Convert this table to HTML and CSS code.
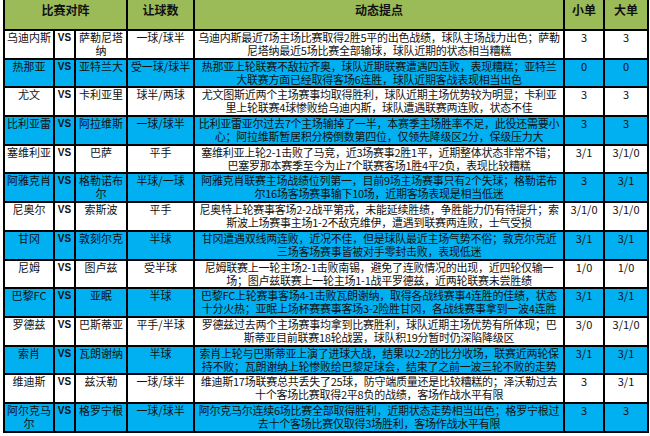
FILE: index.html
```html
<!DOCTYPE html>
<html lang="zh-CN">
<head>
<meta charset="utf-8">
<title>赛事分析</title>
<link rel="stylesheet" href="styles.css">
</head>
<body>
<table class="sheet">
  <colgroup>
    <col class="c-home"><col class="c-vs"><col class="c-away"><col class="c-hc"><col class="c-note"><col class="c-small"><col class="c-big">
  </colgroup>
  <thead>
    <tr class="head">
      <th colspan="3">比赛对阵</th>
      <th>让球数</th>
      <th>动态提点</th>
      <th>小单</th>
      <th>大单</th>
    </tr>
  </thead>
  <tbody>
    <tr class="w"><td>乌迪内斯</td><td class="vs">VS</td><td>萨勒尼塔纳</td><td>一球/球半</td><td class="note">乌迪内斯最近7场主场比赛取得2胜5平的出色战绩，球队主场战力出色；萨勒
尼塔纳最近5场比赛全部输球，球队近期的状态相当糟糕</td><td>3</td><td>3</td></tr>
    <tr class="b"><td>热那亚</td><td class="vs">VS</td><td>亚特兰大</td><td>受一球/球半</td><td class="note">热那亚上轮联赛不敌拉齐奥，球队近期联赛遭遇四连败，表现糟糕；亚特兰
大联赛方面已经取得客场6连胜，球队近期客战表现相当出色</td><td>0</td><td>0</td></tr>
    <tr class="w"><td>尤文</td><td class="vs">VS</td><td>卡利亚里</td><td>球半/两球</td><td class="note">尤文图斯近两个主场赛事均取得胜利，球队近期主场优势较为明显；卡利亚
里上轮联赛4球惨败给乌迪内斯，球队遭遇联赛两连败，状态不佳</td><td>3</td><td>3</td></tr>
    <tr class="b"><td>比利亚雷</td><td class="vs">VS</td><td>阿拉维斯</td><td>一球/球半</td><td class="note">比利亚雷亚尔过去7个主场输掉了一半，本赛季主场胜率不足，此役还需要小
心；阿拉维斯暂居积分榜倒数第四位，仅领先降级区2分，保级压力大</td><td>3</td><td>3</td></tr>
    <tr class="w"><td>塞维利亚</td><td class="vs">VS</td><td>巴萨</td><td>平手</td><td class="note">塞维利亚上轮2-1击败了马竞，近3场赛事2胜1平，近期整体状态非常不错；
巴塞罗那本赛季至今为止7个联赛客场1胜4平2负，表现比较糟糕</td><td>3/1</td><td>3/1/0</td></tr>
    <tr class="b"><td>阿雅克肖</td><td class="vs">VS</td><td>格勒诺布尔</td><td>半球/一球</td><td class="note">阿雅克肖联赛主场战绩位列第一，目前9场主场赛事只有2个失球；格勒诺布
尔16场客场赛事输下10场，近期客场表现是相当低迷</td><td>3</td><td>3/1</td></tr>
    <tr class="w"><td>尼奥尔</td><td class="vs">VS</td><td>索斯波</td><td>平手</td><td class="note">尼奥特上轮赛事客场2-2战平第戎，未能延续胜绩，争胜能力仍有待提升；索
斯波上场赛事主场1-2不敌克维伊，遭遇到联赛两连败，士气受损</td><td>3/1/0</td><td>3/1/0</td></tr>
    <tr class="b"><td>甘冈</td><td class="vs">VS</td><td>敦刻尔克</td><td>半球</td><td class="note">甘冈遭遇双线两连败，近况不佳，但是球队最近主场气势不俗；敦克尔克近
三场客场赛事皆被对手零封击败，表现低迷</td><td>3/1</td><td>3/1</td></tr>
    <tr class="w"><td>尼姆</td><td class="vs">VS</td><td>图卢兹</td><td>受半球</td><td class="note">尼姆联赛上一轮主场2-1击败南锡，避免了连败情况的出现，近四轮仅输一
场；图卢兹联赛上一轮主场1-1战平罗德兹，近两轮联赛未尝胜绩</td><td>1/0</td><td>1/0</td></tr>
    <tr class="b"><td>巴黎FC</td><td class="vs">VS</td><td>亚眠</td><td>半球</td><td class="note">巴黎FC上轮赛事客场4-1击败瓦朗谢纳，取得各战线赛事4连胜的佳绩，状态
十分火热；亚眠上场杯赛赛事客场3-2险胜甘冈，各战线赛事拿到一波4连胜</td><td>3/1</td><td>3/1</td></tr>
    <tr class="w"><td>罗德兹</td><td class="vs">VS</td><td>巴斯蒂亚</td><td>平手/半球</td><td class="note">罗德兹过去两个主场赛事均拿到比赛胜利，球队近期主场优势有所体现；巴
斯蒂亚目前联赛18轮战罢，球队积19分暂时仍深陷降级区</td><td>3/0</td><td>3/1/0</td></tr>
    <tr class="b"><td>索肖</td><td class="vs">VS</td><td>瓦朗谢纳</td><td>半球</td><td class="note">索肖上轮与巴斯蒂亚上演了进球大战，结果以2-2的比分收场，联赛近两轮保
持不败；瓦朗谢纳上轮惨败给巴黎足球会，结束了之前一波三轮不败的走势</td><td>3/1</td><td>3/1</td></tr>
    <tr class="w"><td>维迪斯</td><td class="vs">VS</td><td>兹沃勒</td><td>一球/球半</td><td class="note">维迪斯17场联赛总共丢失了25球，防守端质量还是比较糟糕的；泽沃勒过去
十个客场比赛取得2平8负的战绩，客场作战水平有限</td><td>3</td><td>3/1</td></tr>
    <tr class="b"><td>阿尔克马尔</td><td class="vs">VS</td><td>格罗宁根</td><td>一球/球半</td><td class="note">阿尔克马尔连续6场比赛全部取得胜利，近期状态走势相当出色；格罗宁根过
去十个客场比赛仅取得3场胜利，客场作战水平有限</td><td>3</td><td>3</td></tr>
  </tbody>
</table>
</body>
</html>
```

FILE: styles.css
```css
html, body {
  margin: 0;
  padding: 0;
  background: #fff;
}
body {
  padding: 0 0 0 3px;
  font-family: "Noto Sans CJK SC", "Noto Sans", sans-serif;
  font-size: 11px;
  color: #111;
}
.sheet {
  border-collapse: collapse;
  table-layout: fixed;
  width: 644px;
}
.c-home { width: 50px; }
.c-vs { width: 21px; }
.c-away { width: 52px; }
.c-hc { width: 67px; }
.c-note { width: 370px; }
.c-small { width: 40px; }
.c-big { width: 44px; }

.sheet th,
.sheet td {
  border: 2px solid #000;
  padding: 0 1px;
  text-align: center;
  vertical-align: top;
  line-height: 13px;
  overflow: hidden;
}
.head th {
  background: #9bbb59;
  border-top: none;
  height: 26px;
  font-weight: bold;
  font-size: 12px;
  line-height: 14px;
  padding-top: 3px;
}
.sheet tbody td {
  height: 26.7px;
}
.w td { background: #fff; }
.b td { background: #00b0f0; }
.vs {
  font-family: "Liberation Sans", sans-serif;
  font-size: 10px;
  font-weight: bold;
  padding-left: 0;
  padding-right: 0;
}
.sheet td.note {
  padding-left: 0;
  padding-right: 0;
  white-space: pre;
  letter-spacing: -0.25px;
}
```
